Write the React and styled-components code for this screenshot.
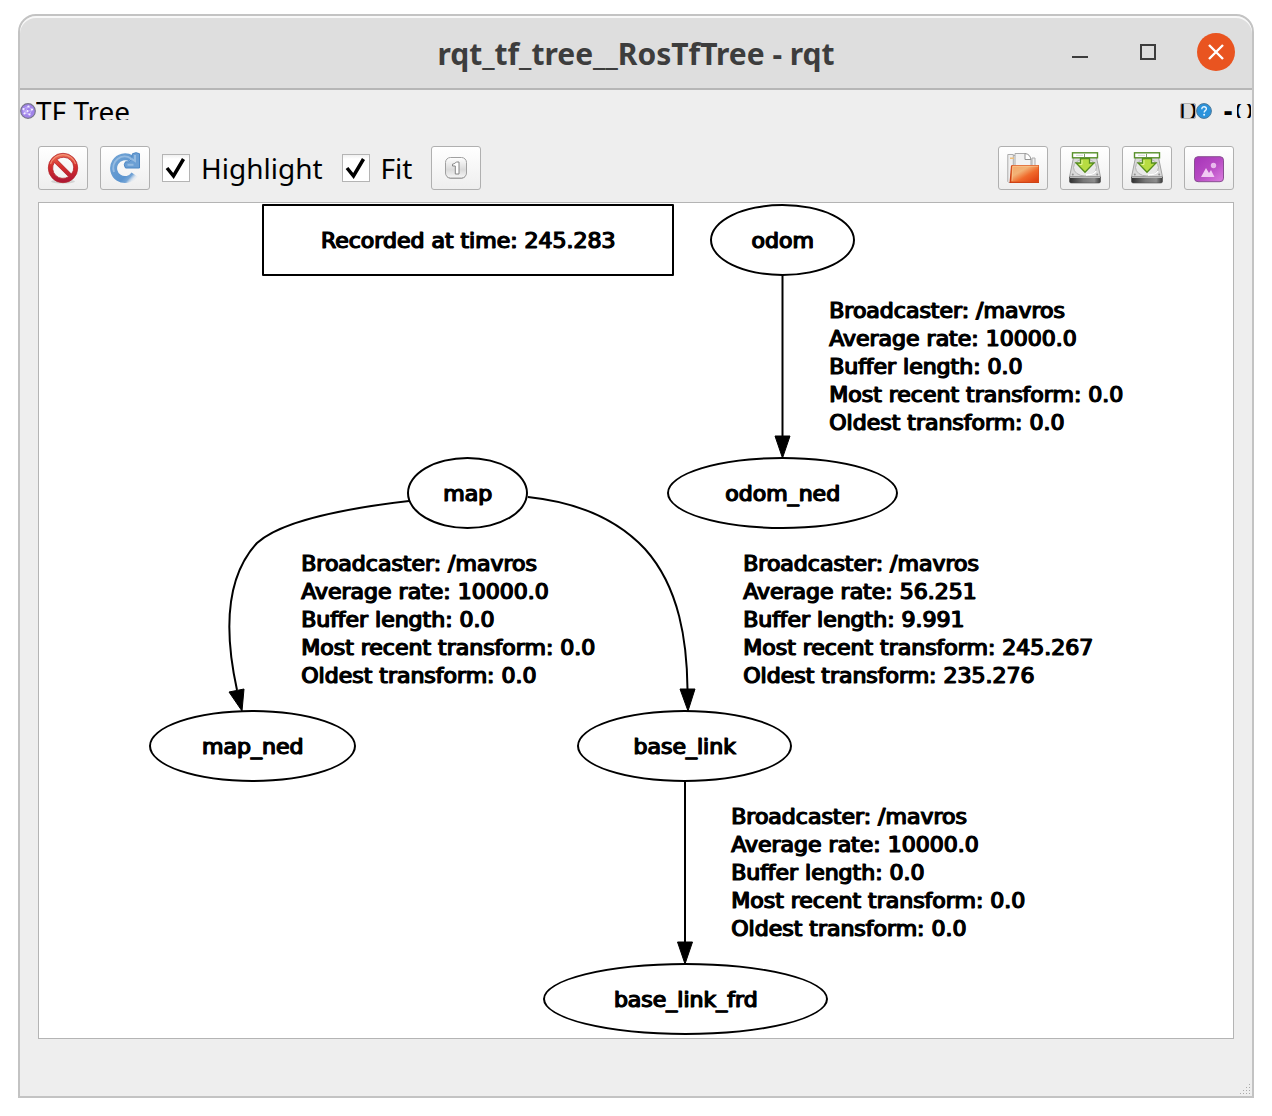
import React, { useState } from 'react';
import styled, { createGlobalStyle } from 'styled-components';

const uiFont = '"Noto Sans", "Open Sans", sans-serif';
const graphFont = '"DejaVu Sans", Verdana, sans-serif';

const GlobalStyle = createGlobalStyle`
  * { box-sizing: border-box; }
  body { margin: 0; background: #ffffff; font-family: ${uiFont}; color: #000000; }
  button { font: inherit; color: inherit; padding: 0; margin: 0; }
`;

const Desktop = styled.div`
  display: flex;
  min-height: 100vh;
  padding: 14px 18px 18px;
`;

const Window = styled.main`
  flex: 1;
  display: flex;
  flex-direction: column;
  min-width: 0;
  border: 2px solid #c3c3c3;
  border-radius: 18px 18px 0 0;
  background: #eeeeee;
  overflow: hidden;
`;

const TitleBar = styled.header`
  display: grid;
  grid-template-columns: 1fr auto 1fr;
  align-items: center;
  height: 74px;
  padding: 0 17px;
  background: #dedede;
  border-bottom: 2px solid #b6b6b6;
  border-radius: 16px 16px 0 0;
  box-shadow: inset 0 2px 0 #f8f8f8;
`;

const Title = styled.h1`
  grid-column: 2;
  margin: 0;
  padding-top: 4px;
  font-size: 30px;
  line-height: 40px;
  font-weight: 700;
  color: #3d3d3d;
`;

const WindowControls = styled.div`
  display: flex;
  justify-content: flex-end;
  gap: 30px;
`;

const WindowButton = styled.button`
  display: grid;
  place-items: center;
  width: 38px;
  height: 38px;
  border: 0;
  border-radius: 50%;
  background: ${(p) => (p.$close ? '#e95420' : 'transparent')};
`;

const DockHeader = styled.div`
  display: flex;
  align-items: center;
  height: 18px;
  margin-top: 12px;
`;

const DockTitle = styled.h2`
  flex: 1;
  height: 18px;
  margin: 0;
  overflow: hidden;
  font-size: 28px;
  line-height: 18px;
  font-weight: 400;
`;

const DockButton = styled.button`
  display: flex;
  align-items: center;
  justify-content: center;
  width: 16px;
  height: 16px;
  padding-top: 2px;
  margin-left: ${(p) => (p.$apart ? '8px' : '0')};
  border: 1px solid ${(p) => (p.$raised ? '#b0b0b0' : 'transparent')};
  border-radius: 2px;
  background: ${(p) => (p.$raised ? '#dcdcdc' : 'transparent')};
  overflow: hidden;
  font-family: "DejaVu Sans Condensed", "DejaVu Sans", sans-serif;
  font-size: 26px;
  line-height: 14px;
  font-weight: ${(p) => (p.$heavy ? 700 : 400)};
`;

const Toolbar = styled.div`
  display: flex;
  align-items: center;
  gap: 12px;
  margin: 26px 18px 12px;
`;

const Spacer = styled.div`
  flex: 1;
`;

const ToolButton = styled.button`
  display: grid;
  place-items: center;
  width: 50px;
  height: 44px;
  border: 1px solid #b0b0b0;
  border-radius: 3px;
  background: linear-gradient(#ffffff, #eeeeee);
`;

const Check = styled.label`
  display: flex;
  align-items: center;
  gap: 11px;
  padding-right: 7px;
  font-size: 28px;
  line-height: 38px;
`;

const CheckBox = styled.span`
  display: grid;
  width: 28px;
  height: 28px;

  & > * { grid-area: 1 / 1; }

  & > svg { pointer-events: none; visibility: hidden; }

  & > input:checked + svg { visibility: visible; }
`;

const CheckInput = styled.input`
  appearance: none;
  width: 28px;
  height: 28px;
  margin: 0;
  border: 1px solid #b4b4b4;
  background: linear-gradient(#f0f0f0, #ffffff 4px);
`;

const GraphView = styled.section`
  display: flex;
  flex: 1;
  justify-content: center;
  margin: 0 18px;
  border: 1px solid #b4b4b4;
  background: #ffffff;
  overflow: hidden;
`;

const Scene = styled.div`
  position: relative;
  flex: none;
  width: 1194px;
  height: 835px;
  font-family: ${graphFont};
  font-size: 22px;
  line-height: 28px;
  white-space: nowrap;
  -webkit-text-stroke: 1px #000000;
  text-shadow: 1px 0 0 #000000;
`;

const Edges = styled.svg`
  position: absolute;
  inset: 0;
`;

const Node = styled.div`
  position: absolute;
  left: ${(p) => p.$x}px;
  top: ${(p) => p.$y}px;
  display: flex;
  align-items: center;
  justify-content: center;
  width: ${(p) => p.$w}px;
  height: 72px;
  padding-top: 1px;
  border: 2px solid #000000;
  border-radius: ${(p) => (p.$box ? '1px' : '50%')};
`;

const EdgeLabel = styled.div`
  position: absolute;
  left: ${(p) => p.$x}px;
  top: ${(p) => p.$y}px;
`;

const StatusArea = styled.footer`
  display: flex;
  align-items: flex-end;
  justify-content: flex-end;
  height: 57px;
  padding: 2px;
`;

function PluginIcon() {
  return (
    <svg width="16" height="16" viewBox="0 0 16 16">
      <circle cx="8" cy="8" r="7.3" fill="#a184ea" stroke="#77758a" strokeWidth="1.2" />
      <path d="M3 6l5-2.500 4 3-2.500 5-5-1.500zM3 6l6.500 5.500M8 3.500l-3.500 6.500M12 6.500l-7.500 3.500" fill="none" stroke="#c8b6fa" strokeWidth=".8" />
      <g fill="#f4efff">
        <circle cx="3.500" cy="6" r="1.100" /><circle cx="8.500" cy="3.500" r="1.100" />
        <circle cx="12" cy="6.500" r="1.100" /><circle cx="9.500" cy="11.500" r="1.100" />
        <circle cx="4.500" cy="10.500" r="1.100" /><circle cx="7.500" cy="8" r="1" />
      </g>
    </svg>
  );
}

function HelpIcon() {
  return (
    <svg width="16" height="16" viewBox="0 0 16 16">
      <circle cx="8" cy="8" r="7.400" fill="#2b93dc" stroke="#4c7899" strokeWidth="1" />
      <path d="M5.800 6.200c0-3.400 4.800-3 4.600-.2-.1 1.700-2.200 1.600-2.200 3.400" fill="none" stroke="#e6f5ff" strokeWidth="1.400" />
      <circle cx="8.100" cy="11.800" r="1" fill="#e6f5ff" />
    </svg>
  );
}

function BanIcon() {
  return (
    <svg width="32" height="32" viewBox="0 0 32 32">
      <defs>
        <linearGradient id="ban" x1="0" y1="0" x2="0" y2="1">
          <stop offset="0" stopColor="#ee7557" />
          <stop offset=".45" stopColor="#d62e2c" />
          <stop offset="1" stopColor="#ab1436" />
        </linearGradient>
      </defs>
      <ellipse cx="16" cy="29.500" rx="12" ry="2" fill="#000000" opacity=".12" />
      <path fillRule="evenodd" fill="url(#ban)" stroke="#b3262d" strokeWidth=".8" d="M16 1.300a14.700 14.700 0 1 0 0 29.400 14.700 14.700 0 1 0 0-29.400zM9.900 7.600 24.400 22.100A10.300 10.300 0 0 0 9.900 7.600zM7.300 10.500A10.300 10.300 0 0 0 21.600 24.700z" />
      <path d="M3.500 12A13 13 0 0 1 28.500 12" fill="none" stroke="#f7a184" strokeWidth="1.200" opacity=".7" />
    </svg>
  );
}

function ReloadIcon() {
  return (
    <svg width="32" height="32" viewBox="0 0 32 32">
      <defs>
        <linearGradient id="reload" x1="0" y1="0" x2="1" y2="1">
          <stop offset="0" stopColor="#6fa2d4" />
          <stop offset=".7" stopColor="#5b94cf" />
          <stop offset=".84" stopColor="#75a5d6" />
          <stop offset=".97" stopColor="#b9d1ea" stopOpacity=".2" />
        </linearGradient>
      </defs>
      <path d="M25.500 22.500A11.400 11.400 0 1 1 22 6.500" fill="none" stroke="url(#reload)" strokeWidth="7" />
      <path d="M22.500 7l1-5.300q3.500-2 7 0V16H16.500q-2.500-3.300 0-6.200h3.800z" fill="#6b9fd4" stroke="#4c86c3" strokeWidth="1" strokeLinejoin="round" />
      <path d="M5 20A11.400 11.400 0 0 1 22 6.500L26 9V3M24.500 12.800h-6" fill="none" stroke="#a3c4e5" strokeWidth="2" opacity=".75" />
    </svg>
  );
}

function OneIcon() {
  return (
    <svg width="24" height="24" viewBox="0 0 24 24">
      <defs>
        <linearGradient id="keycap" x1="0" y1="0" x2="0" y2="1">
          <stop offset="0" stopColor="#ffffff" />
          <stop offset=".6" stopColor="#dadada" />
          <stop offset="1" stopColor="#f6f6f6" />
        </linearGradient>
      </defs>
      <rect x="2" y="3" width="20" height="20" rx="5" fill="#777777" opacity=".6" />
      <rect x="1.500" y="1.500" width="21" height="20.500" rx="5" fill="url(#keycap)" stroke="#a0a0a0" />
      <path d="M8.500 8.200c2-.5 3-1.200 3.800-2.200H15v12h-3.700V10H8.500z" fill="#ffffff" stroke="#858585" />
    </svg>
  );
}

function FolderIcon() {
  return (
    <svg width="32" height="32" viewBox="0 0 32 32">
      <defs>
        <linearGradient id="folder" x1="0" y1="0" x2="1" y2="1">
          <stop offset="0" stopColor="#f6a96a" />
          <stop offset=".35" stopColor="#f2b276" />
          <stop offset=".6" stopColor="#f06a2c" />
          <stop offset="1" stopColor="#dc380d" />
        </linearGradient>
      </defs>
      <path d="M.8 2.500h5.500v28H1.800l-1-1zM6 3.500h3V30H6M25 6h3v9h-3z" fill="#efefef" stroke="#acacac" />
      <path d="M3 5.500h4v1.500H3z" fill="#edbd78" />
      <path d="M8 1.500h10l6 6V20H8z" fill="#f2f2f2" stroke="#aaaaaa" />
      <path d="M18 1.500v6h6q-1-5.500-6-6z" fill="#ffffff" stroke="#929292" />
      <path d="M4 13.500h28V31H2.500z" fill="#c93a10" />
      <path d="M5 13.500h26.800V30H4z" fill="url(#folder)" stroke="#d9541f" strokeWidth=".8" />
      <path d="M5 29l.8-14.800h25.500" fill="none" stroke="#ffd09b" opacity=".6" />
    </svg>
  );
}

function DriveIcon({ id }) {
  return (
    <svg width="32" height="32" viewBox="0 0 32 32">
      <defs>
        <linearGradient id={id} x1="0" y1="0" x2="1" y2="0">
          <stop offset="0" stopColor="#303030" />
          <stop offset=".45" stopColor="#777777" />
          <stop offset=".8" stopColor="#8d8d8d" />
          <stop offset="1" stopColor="#3a3a3a" />
        </linearGradient>
      </defs>
      <path d="M5 3h22l4.500 22H.5z" fill="#d9d9d9" stroke="#a3a3a3" />
      <path d="M.5 25h31v4.500q0 1.500-2 1.500h-27q-2 0-2-1.500z" fill={`url(#${id})`} stroke="#4d4d4d" strokeWidth=".6" />
      <path d="M1 25.500h30" stroke="#b9b9b9" />
      <ellipse cx="16" cy="15.500" rx="11.500" ry="8.500" fill="#e9e9e9" stroke="#b3b3b3" />
      <path d="M17 23q8 0 10-4" fill="none" stroke="#ffffff" strokeWidth="1.500" />
      <circle cx="3.800" cy="22.500" r="1" fill="#929292" /><circle cx="28.200" cy="22.500" r="1" fill="#929292" />
      <rect x="3.500" y=".8" width="25" height="5" fill="#ffffff" stroke="#58902a" strokeWidth="1.400" />
      <path d="M7 3.300h7" stroke="#d4d4d4" /><path d="M15.500 1.800v3.500" stroke="#7b9c62" />
      <path d="M11.500 6.500h9V11H25l-9 9.300L7 11h4.500z" fill="#b7dc42" stroke="#568d1f" strokeWidth="1.300" />
      <path d="M13 8v4.500h-2.500" fill="none" stroke="#e4f69b" />
    </svg>
  );
}

function ImageIcon() {
  return (
    <svg width="32" height="32" viewBox="0 0 32 32">
      <defs>
        <linearGradient id="image" x1="0" y1="0" x2="1" y2="1">
          <stop offset="0" stopColor="#a634b8" />
          <stop offset=".5" stopColor="#b749c3" />
          <stop offset="1" stopColor="#dc7fe0" />
        </linearGradient>
      </defs>
      <rect x="1.500" y="4.700" width="29" height="25" rx="3.500" fill="url(#image)" stroke="#884f91" />
      <circle cx="20.500" cy="13.500" r="2.700" fill="#e8b8ec" />
      <path d="M8 25l5-9 3 5 2-3 3.500 7z" fill="#f1c9f3" />
    </svg>
  );
}

function SizeGrip() {
  const dots = [];
  for (let row = 0; row < 4; row += 1) {
    for (let col = 3 - row; col < 4; col += 1) {
      dots.push(<rect key={`${row}-${col}`} x={col * 3} y={row * 3} width="1" height="1" />);
    }
  }
  return <svg width="10" height="10" fill="#aaaaaa" aria-hidden="true">{dots}</svg>;
}

function Toggle({ label, checked, onChange }) {
  return (
    <Check>
      <CheckBox>
        <CheckInput type="checkbox" checked={checked} onChange={(e) => onChange(e.target.checked)} />
        <svg width="28" height="28" viewBox="0 0 28 28" aria-hidden="true">
          <path d="M5 14 11.500 22 21.500 5" fill="none" stroke="#000000" strokeWidth="3.500" />
        </svg>
      </CheckBox>
      {label}
    </Check>
  );
}

const nodes = [
  { name: 'Recorded at time: 245.283', x: 223, y: 1, w: 412, box: true },
  { name: 'odom', x: 671, y: 1, w: 145 },
  { name: 'odom_ned', x: 628, y: 254, w: 231 },
  { name: 'map', x: 368, y: 254, w: 121 },
  { name: 'map_ned', x: 110, y: 507, w: 207 },
  { name: 'base_link', x: 538, y: 507, w: 215 },
  { name: 'base_link_frd', x: 504, y: 760, w: 285 },
];

const transforms = [
  { x: 790, y: 94, rate: '10000.0', length: '0.0', recent: '0.0', oldest: '0.0' },
  { x: 262, y: 347, rate: '10000.0', length: '0.0', recent: '0.0', oldest: '0.0' },
  { x: 704, y: 347, rate: '56.251', length: '9.991', recent: '245.267', oldest: '235.276' },
  { x: 692, y: 600, rate: '10000.0', length: '0.0', recent: '0.0', oldest: '0.0' },
];

const edges = [
  { line: 'M743.500 72V233', head: '736,233 751,233 743.500,255' },
  { line: 'M370 298C301 306 241 319 218 340C184 377 187 437 198 487', head: '190,489 205,486 203,508' },
  { line: 'M489 294C536 299 577 315 606 346C641 385 648 440 648.500 486', head: '641,486 656,486 649,508' },
  { line: 'M646 578V739', head: '638.500,739 653.500,739 646,761' },
];

export default function App() {
  const [highlight, setHighlight] = useState(true);
  const [fit, setFit] = useState(true);

  return (
    <>
      <GlobalStyle />
      <Desktop>
        <Window>
          <TitleBar>
            <Title>rqt_tf_tree__RosTfTree - rqt</Title>
            <WindowControls>
              <WindowButton aria-label="Minimize">
                <svg width="16" height="16"><path d="M0 13h16" stroke="#3d3d3d" strokeWidth="2" /></svg>
              </WindowButton>
              <WindowButton aria-label="Maximize">
                <svg width="16" height="16"><rect x="1" y="1" width="14" height="14" fill="none" stroke="#3d3d3d" strokeWidth="2" /></svg>
              </WindowButton>
              <WindowButton $close aria-label="Close">
                <svg width="16" height="16"><path d="M1 1l14 14M15 1L1 15" stroke="#ffffff" strokeWidth="2.400" /></svg>
              </WindowButton>
            </WindowControls>
          </TitleBar>

          <DockHeader>
            <PluginIcon />
            <DockTitle>TF Tree</DockTitle>
            <DockButton $raised>D</DockButton>
            <HelpIcon />
            <DockButton $apart $heavy>-</DockButton>
            <DockButton>O</DockButton>
          </DockHeader>

          <Toolbar>
            <ToolButton aria-label="Clear buffer"><BanIcon /></ToolButton>
            <ToolButton aria-label="Refresh"><ReloadIcon /></ToolButton>
            <Toggle label="Highlight" checked={highlight} onChange={setHighlight} />
            <Toggle label="Fit" checked={fit} onChange={setFit} />
            <ToolButton aria-label="Fit in view"><OneIcon /></ToolButton>
            <Spacer />
            <ToolButton aria-label="Load"><FolderIcon /></ToolButton>
            <ToolButton aria-label="Save as DOT"><DriveIcon id="drive-dot" /></ToolButton>
            <ToolButton aria-label="Save as SVG"><DriveIcon id="drive-svg" /></ToolButton>
            <ToolButton aria-label="Save as image"><ImageIcon /></ToolButton>
          </Toolbar>

          <GraphView>
            <Scene>
              <Edges width="1194" height="835" viewBox="0 0 1194 835">
                {edges.map((e) => (
                  <g key={e.line} stroke="#000000">
                    <path d={e.line} fill="none" strokeWidth="2" />
                    <polygon points={e.head} />
                  </g>
                ))}
              </Edges>
              {nodes.map((n) => (
                <Node key={n.name} $x={n.x} $y={n.y} $w={n.w} $box={n.box}>{n.name}</Node>
              ))}
              {transforms.map((t) => (
                <EdgeLabel key={`${t.x}-${t.y}`} $x={t.x} $y={t.y}>
                  <div>Broadcaster: /mavros</div>
                  <div>Average rate: {t.rate}</div>
                  <div>Buffer length: {t.length}</div>
                  <div>Most recent transform: {t.recent}</div>
                  <div>Oldest transform: {t.oldest}</div>
                </EdgeLabel>
              ))}
            </Scene>
          </GraphView>

          <StatusArea><SizeGrip /></StatusArea>
        </Window>
      </Desktop>
    </>
  );
}
